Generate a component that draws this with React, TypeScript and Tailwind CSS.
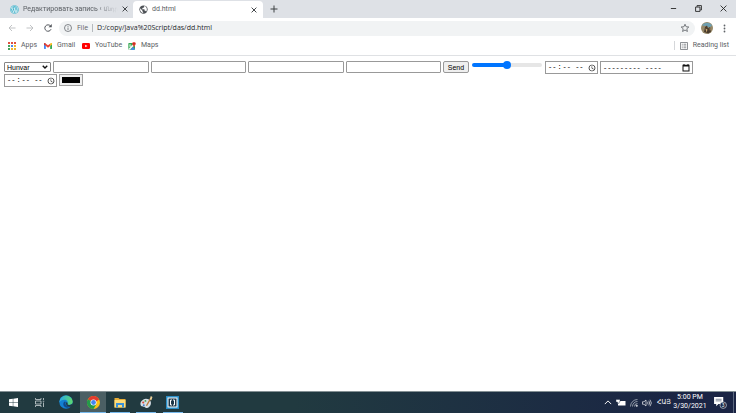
import React, { useState } from "react";

const WordPressIcon = () => (
  <svg viewBox="0 0 20 20" className="size-[9px] shrink-0">
    <circle cx="10" cy="10" r="9.6" fill="#3fb0c9" />
    <circle cx="10" cy="10" r="8" fill="none" stroke="#fff" strokeWidth="1" />
    <path d="M3.5 6.5h4M4.5 7l3.5 9.5L10.3 10 9 6.5h4M10.3 8l3 8.5L16 9c.4-1.6-1-2-1-3.5" fill="none" stroke="#fff" strokeWidth="1.6" />
  </svg>
);

const GlobeIcon = () => (
  <svg viewBox="0 0 24 24" className="size-[9px] shrink-0">
    <circle cx="12" cy="12" r="11" fill="#4d5156" />
    <path d="M3 8.5l6 6v2l2 2v3C5.5 20.5 2 16 3 8.5zM14 3v2l-2 2h-2v2H8v2.5h6l1 1v3h2l2 2c3.5-4 3-12-5-15.5z" fill="#fff" />
  </svg>
);

const CloseIcon = () => (
  <svg viewBox="0 0 10 10" className="size-[6px]" stroke="#3c4043" strokeWidth="1.6" fill="none">
    <path d="M1 1l8 8M9 1L1 9" />
  </svg>
);

const StarIcon = () => (
  <svg viewBox="0 0 24 24" className="size-[10px]" fill="none" stroke="#5f6368" strokeWidth="2">
    <path d="M12 3l2.7 6 6.5.6-4.9 4.3 1.5 6.4L12 16.9l-5.8 3.4 1.5-6.4-4.9-4.3 6.5-.6z" />
  </svg>
);

const AppsIcon = () => (
  <svg viewBox="0 0 8 8" className="size-[8px]">
    <path d="M0 0h2v2H0zM3 0h2v2H3zM6 0h2v2H6z" fill="#e0503f" />
    <path d="M0 3h2v2H0z" fill="#43a25a" />
    <path d="M3 3h2v2H3z" fill="#4c86e8" />
    <path d="M6 3h2v2H6zM3 6h2v2H3zM6 6h2v2H6z" fill="#efb52f" />
    <path d="M0 6h2v2H0z" fill="#43a25a" />
  </svg>
);

const GmailIcon = () => (
  <svg viewBox="0 0 24 18" className="h-[6px] w-[8px]">
    <path d="M0 3v13.5c0 .8.7 1.5 1.5 1.5H5.5V8z" fill="#4285f4" />
    <path d="M24 3v13.5c0 .8-.7 1.5-1.5 1.5h-4V8z" fill="#34a853" />
    <path d="M18.5 2v7L24 4.5V2.5C24 0 21.5-.8 19.7.8z" fill="#fbbc04" />
    <path d="M5.5 9V2L12 7l6.5-5v7L12 14z" fill="#ea4335" />
    <path d="M0 2.5v2L5.5 9V2L4.3.8C2.5-.8 0 0 0 2.5z" fill="#c5221f" />
  </svg>
);

const YouTubeIcon = () => (
  <svg viewBox="0 0 24 18" className="h-[6px] w-[8px]">
    <rect width="24" height="18" rx="4" fill="#f00" />
    <path d="M9.5 5v8l7-4z" fill="#fff" />
  </svg>
);

const MapsIcon = () => (
  <svg viewBox="0 0 24 24" className="size-[8px]">
    <rect x="1" y="3" width="20" height="20" rx="2" fill="#34a853" />
    <path d="M1 21L19 3h2v5L6 23H3z" fill="#f3f3f3" />
    <path d="M7 23l8-8 6 6c0 1-1 2-2 2z" fill="#4285f4" />
    <path d="M18 0c-3 0-5.5 2.3-5.5 5.5C12.5 9.5 17 11 18 16c1-5 5.5-6.5 5.5-10.5C23.5 2.3 21 0 18 0z" fill="#ea4335" />
    <circle cx="18" cy="5.5" r="2" fill="#811411" />
    <path d="M10 9.5H6.5V11h1.8a2 2 0 1 1-.6-2.2l1-1a3.5 3.5 0 1 0 1.3 2.7z" fill="#fff" />
  </svg>
);

const ChromeIcon = () => (
  <svg viewBox="0 0 24 24" className="size-[13px]">
    <circle cx="12" cy="12" r="12" fill="#fbc116" />
    <path d="M12 12L1.6 6A12 12 0 0 1 22.4 6z" fill="#e33b2e" />
    <path d="M1.6 6A12 12 0 0 0 12 24l5.2-9L12 12z" fill="#229a4b" />
    <path d="M12 6h10.4L17 10z" fill="#e33b2e" />
    <circle cx="12" cy="12" r="5.6" fill="#fff" />
    <circle cx="12" cy="12" r="4.4" fill="#4285f4" />
  </svg>
);

const EdgeIcon = () => (
  <svg viewBox="0 0 24 24" className="size-[14px]">
    <defs>
      <linearGradient id="edgeTop" x1="0" x2="1">
        <stop offset="0" stopColor="#28a8e8" />
        <stop offset="1" stopColor="#5ddb6c" />
      </linearGradient>
    </defs>
    <circle cx="12" cy="12" r="11.5" fill="#1380d2" />
    <path d="M.7 11A11.5 11.5 0 0 1 23.5 11c0 4-3 6-6.5 6-2.5 0-3.5-1-2.5-2.5C16 12 14 8 9.5 8 5 8 1.5 10 .7 13z" fill="url(#edgeTop)" />
    <path d="M10 11c-4 2-3.5 8.5 2 10.5 4 1.3 7.5-.5 10-3.5-5 2.5-10.5.5-11-3-.2-1.5.5-2.5 1-3z" fill="#114a8b" />
    <path d="M15 14.5c-1 1.5 0 2.5 2.5 2.5 2.3 0 4.3-1 5.3-2.5l1.2 3.5-3 2c-5 1-9-2-9-5 0-1.5 1-3 1.5-3z" fill="#203a42" />
  </svg>
);

const ExplorerIcon = () => (
  <svg viewBox="0 0 24 22" className="h-[11px] w-[12px]">
    <path d="M1 2h8l2 2h12v17H1z" fill="#e6ad37" />
    <path d="M1 6h22v15H1z" fill="#ffdc78" />
    <path d="M4 12h16v9h-4v-5H8v5H4z" fill="#3a91d8" />
  </svg>
);

const PaintIcon = () => (
  <svg viewBox="0 0 24 24" className="size-[13px]">
    <path d="M11 5C4 6 0 11 1 16c1 4 5 3 7 4 2 1 2 3 5 2 5-1 8-6 7-11-1-4-5-6-9-6z" fill="#d5dfe5" />
    <circle cx="6" cy="12" r="2" fill="#d9493b" />
    <circle cx="10" cy="9" r="1.8" fill="#4aa04f" />
    <circle cx="7" cy="17" r="1.7" fill="#3d7cc9" />
    <path d="M12 18L20 4" stroke="#bd7838" strokeWidth="2.5" />
    <path d="M18 6l2-6 3 2-2 6z" fill="#ecd29a" />
  </svg>
);

const BracketsIcon = () => (
  <svg viewBox="0 0 26 26" className="size-[13px]">
    <rect width="26" height="26" fill="#2b8fc7" />
    <rect x="3" y="3" width="20" height="20" fill="#fff" />
    <rect x="5" y="5" width="16" height="16" fill="#1c3546" />
    <path d="M12 8H9v10h3M14 8h3v10h-3" fill="none" stroke="#fff" strokeWidth="2" />
  </svg>
);

const StartIcon = () => (
  <svg viewBox="0 0 20 20" className="size-[9px]" fill="#fff">
    <path d="M0 3l8.5-1.2v7.7H0zM9.5 1.6L20 0v9.5H9.5zM0 10.5h8.5v7.7L0 17zM9.5 10.5H20V20L9.5 18.4z" />
  </svg>
);

const TaskViewIcon = () => (
  <svg viewBox="0 0 20 18" className="h-[9px] w-[10px]" fill="none" stroke="#d6dcde" strokeWidth="1.5">
    <path d="M1 0v3h11V0M1 18v-3h11v3M1 6h11v6H1zM17 0v4M17 9v9M15.5 6.5h3" />
  </svg>
);

const bookmarks = [
  { label: "Apps", icon: <AppsIcon />, width: "w-[36px]" },
  { label: "Gmail", icon: <GmailIcon />, width: "w-[38px]" },
  { label: "YouTube", icon: <YouTubeIcon />, width: "w-[46px]" },
  { label: "Maps", icon: <MapsIcon />, width: "w-[40px]" },
];

const taskbarApps = [
  { label: "Start", icon: <StartIcon />, line: "" },
  { label: "Task View", icon: <TaskViewIcon />, line: "" },
  { label: "Edge", icon: <EdgeIcon />, line: "" },
  { label: "Chrome", icon: <ChromeIcon />, line: "w-full", active: true },
  { label: "File Explorer", icon: <ExplorerIcon />, line: "w-[20px]" },
  { label: "Paint", icon: <PaintIcon />, line: "w-[20px]" },
  { label: "Brackets", icon: <BracketsIcon />, line: "w-[20px]" },
];

const TabStrip = () => (
  <header className="flex h-[18px] items-stretch bg-[#dee1e6] text-[7px] text-[#3c4043]">
    <div className="flex w-[133px] items-center gap-[4px] pr-[5px] pl-[10px]">
      <WordPressIcon />
      <div className="min-w-0 flex-1 whitespace-nowrap text-[#5a5e63] [mask-image:linear-gradient(to_right,#000_78%,transparent)]">
        Редактировать запись ‹{" "}
        <span className="font-['DejaVu_Sans_Condensed','DejaVu_Sans',sans-serif] text-[6px]">Անդրա</span>
      </div>
      <button aria-label="Close tab" className="shrink-0"><CloseIcon /></button>
    </div>
    <div className="mt-px flex w-[130px] items-center gap-[4px] rounded-t-[4px] bg-white pr-[6px] pl-[6px]">
      <GlobeIcon />
      <div className="flex-1 text-[#5a5e63]">dd.html</div>
      <button aria-label="Close tab"><CloseIcon /></button>
    </div>
    <button aria-label="New tab" className="flex w-[22px] items-center justify-center">
      <svg viewBox="0 0 8 8" className="size-[8px]" stroke="#3c4043" fill="none"><path d="M4 .5v7M.5 4h7" /></svg>
    </button>
    <div className="ml-auto flex h-[16px] items-center text-[#222]">
      <button aria-label="Minimize" className="flex w-[25px] justify-center">
        <svg viewBox="0 0 8 8" className="size-[7px]" stroke="currentColor"><path d="M1 4h6" /></svg>
      </button>
      <button aria-label="Restore" className="flex w-[25px] justify-center">
        <svg viewBox="0 0 12 12" className="size-[7px]" stroke="currentColor" strokeWidth="1.5" fill="none"><path d="M1 3.5h7.5V11H1zM3.5 3V1H11v7.5H9" /></svg>
      </button>
      <button aria-label="Close" className="flex w-[25px] justify-center">
        <svg viewBox="0 0 12 12" className="size-[7px]" stroke="currentColor" strokeWidth="1.5"><path d="M1 1l10 10M11 1L1 11" /></svg>
      </button>
    </div>
  </header>
);

const Toolbar = () => {
  const [url, setUrl] = useState("D:/copy/Java%20Script/das/dd.html");

  return (
    <div className="flex h-[20px] items-center bg-white pr-[10px] pl-[8px] font-['Open_Sans',sans-serif]">
      <div className="flex w-[51px] items-center gap-[10px]">
        <button aria-label="Back">
          <svg viewBox="0 0 16 16" className="size-[8px]" fill="none" stroke="#babcbe" strokeWidth="1.8"><path d="M15 8H2M8 2L2 8l6 6" /></svg>
        </button>
        <button aria-label="Forward">
          <svg viewBox="0 0 16 16" className="size-[8px]" fill="none" stroke="#babcbe" strokeWidth="1.8"><path d="M1 8h13M8 2l6 6-6 6" /></svg>
        </button>
        <button aria-label="Reload">
          <svg viewBox="0 0 16 16" className="size-[8px]" fill="none" stroke="#50545a" strokeWidth="2"><path d="M14 10.5A6.4 6.4 0 1 1 13 4" /><path d="M15.5 0v6.5H9z" fill="#50545a" stroke="none" /></svg>
        </button>
      </div>
      <div className="flex h-[15px] flex-1 items-center rounded-full bg-[#f1f3f4] pr-[5px] pl-[5px] text-[7px]">
        <svg viewBox="0 0 16 16" className="size-[8px]" fill="none" stroke="#5f6368" strokeWidth="1.5"><circle cx="8" cy="8" r="7" /><path d="M8 7v5M8 4v1.7" /></svg>
        <label htmlFor="address" className="ml-[5px] text-[#5f6368]">File</label>
        <span className="mx-[4px] h-[8px] w-px bg-[#b5b9bd]" />
        <input id="address" value={url} onChange={(e) => setUrl(e.target.value)} className="min-w-0 flex-1 text-[#25282c] outline-none" />
        <button aria-label="Bookmark this page"><StarIcon /></button>
      </div>
      <button aria-label="Profile" className="ml-[6px]">
        <svg viewBox="0 0 24 24" className="size-[12px]">
          <circle cx="12" cy="12" r="12" fill="#968868" />
          <path d="M2 7a12 12 0 0 1 20 0l-5 4-8-3z" fill="#6d9fb1" />
          <path d="M6 20l2-10 4-3 2 6 4-3 2 9-5 4z" fill="#493b2c" />
          <path d="M9 13l4 2-2 6zM17 12l2 2-1 4z" fill="#d2ae75" />
        </svg>
      </button>
      <button aria-label="Menu" className="ml-[10px]">
        <svg viewBox="0 0 4 12" className="h-[9px] w-[3px]" fill="#5f6368"><circle cx="2" cy="2" r="1.2" /><circle cx="2" cy="6" r="1.2" /><circle cx="2" cy="10" r="1.2" /></svg>
      </button>
    </div>
  );
};

const BookmarksBar = () => (
  <nav className="flex h-[18px] items-center border-b border-[#dfe1e4] bg-white pr-[7px] pb-[2px] pl-[8px] text-[7px] text-[#5a5e63]">
    {bookmarks.map((item) => (
      <a key={item.label} href="#" className={`flex items-center gap-[5px] ${item.width}`}>
        {item.icon}
        {item.label}
      </a>
    ))}
    <div className="ml-auto flex items-center gap-[5px]">
      <span className="h-[9px] w-px bg-[#d5d7da]" />
      <button className="flex items-center gap-[5px]">
        <svg viewBox="0 0 16 16" className="size-[8px]" fill="none" stroke="#6a6e73" strokeWidth="1.5"><path d="M1 1h14v14H1zM3.5 4.5h2M7 4.5h5.5M3.5 8h2M7 8h5.5M3.5 11.5h2M7 11.5h5.5" /></svg>
        Reading list
      </button>
    </div>
  </nav>
);

const textFields = ["First", "Second", "Third", "Fourth"];

const TimeInput = ({ label }: { label: string }) => (
  <input
    type="time"
    aria-label={label}
    className="h-[13px] w-[53px] border border-[#999] bg-white px-px font-['Liberation_Mono'] text-[7px] leading-none [&::-webkit-calendar-picker-indicator]:m-0 [&::-webkit-calendar-picker-indicator]:size-[8px] [&::-webkit-calendar-picker-indicator]:p-0"
  />
);

const PageForm = () => (
  <form
    onSubmit={(e) => e.preventDefault()}
    className="flex flex-wrap items-start gap-x-[2px] px-[4px] pt-[5px] font-['Liberation_Sans',sans-serif] text-[7px] text-black"
  >
    <div className="grid items-center pt-px">
      <select aria-label="Month" className="col-start-1 row-start-1 h-[10px] w-[47px] appearance-none rounded-[1px] border border-[#858585] bg-white pl-[2px] leading-none">
        <option>Hunvar</option>
      </select>
      <svg viewBox="0 0 12 8" className="pointer-events-none col-start-1 row-start-1 mr-[3px] h-[4px] w-[6px] justify-self-end" fill="none" stroke="#111" strokeWidth="2.8"><path d="M1.5 1.5L6 6l4.5-4.5" /></svg>
    </div>
    <div className="flex w-[388px] gap-[2px]">
      {textFields.map((name) => (
        <input key={name} type="text" aria-label={name} className="h-[12px] min-w-0 flex-1 rounded-[1px] border border-[#999] bg-white px-px" />
      ))}
    </div>
    <button type="submit" className="h-[12px] w-[26px] rounded-[2px] border border-[#999] bg-[#efefef] leading-none">Send</button>
    <input
      type="range"
      aria-label="Range"
      className="mx-px h-[8px] w-[70px] appearance-none bg-transparent [&::-webkit-slider-runnable-track]:h-[4px] [&::-webkit-slider-runnable-track]:rounded-full [&::-webkit-slider-runnable-track]:bg-[linear-gradient(to_right,#0075ff_50%,#e6e6e6_50%)] [&::-webkit-slider-thumb]:-mt-[2px] [&::-webkit-slider-thumb]:size-[8px] [&::-webkit-slider-thumb]:appearance-none [&::-webkit-slider-thumb]:rounded-full [&::-webkit-slider-thumb]:bg-[#0075ff]"
    />
    <TimeInput label="Start time" />
    <div className="flex h-[13px] w-[93px] items-center border border-[#999] bg-white pr-[2px] pl-[2px]">
      <input
        type="text"
        aria-label="Month and year"
        placeholder="--------- ----"
        className="min-w-0 flex-1 font-['Liberation_Mono'] leading-none outline-none placeholder:text-black"
      />
      <button type="button" aria-label="Open calendar">
        <svg viewBox="0 0 16 16" className="size-[8px]"><path d="M3 0h2v1.5h6V0h2v1.5h2V15H1V1.500h2zM3 5v8h10V5z" fill="#111" fillRule="evenodd" /></svg>
      </button>
    </div>
    <TimeInput label="End time" />
    <input
      type="color"
      aria-label="Color"
      defaultValue="#000000"
      className="h-[12px] w-[24px] appearance-none border border-[#a0a0a0] bg-[#efefef] p-[2px] [&::-webkit-color-swatch]:border-0 [&::-webkit-color-swatch-wrapper]:p-0"
    />
  </form>
);

const Taskbar = () => (
  <footer className="flex h-[22px] items-stretch border-t border-[#849094] bg-linear-to-r from-[#213a40] from-40% to-[#1a2444] to-95% text-[7px] text-white">
    <div className="flex w-[186px]">
      {taskbarApps.map((app) => (
        <button key={app.label} aria-label={app.label} className={`flex flex-1 flex-col items-center ${app.active ? "bg-[#4b5f64]" : ""}`}>
          <span className="flex flex-1 items-center">{app.icon}</span>
          <span className={`h-px bg-[#76b9ed] ${app.line}`} />
        </button>
      ))}
    </div>
    <div className="ml-auto flex items-center gap-[4px]">
      <svg viewBox="0 0 10 6" className="h-[5px] w-[8px]" fill="none" stroke="#fff" strokeWidth="1.2"><path d="M1 5l4-4 4 4" /></svg>
      <svg viewBox="0 0 20 14" className="h-[7px] w-[10px]"><path d="M4 4h15v9H4z" fill="#fff" /><path d="M0 1h8v5H6v3H3V6H0z" fill="#fff" stroke="#1c2a43" strokeWidth=".8" /></svg>
      <svg viewBox="0 0 16 16" className="size-[8px]" fill="none" stroke="#c2c8d0" strokeWidth="1.4"><path d="M1 15A14 14 0 0 1 15 1M5 15A10 10 0 0 1 15 5M9 15A6 6 0 0 1 15 9" /><circle cx="13.5" cy="13.5" r="1.5" fill="#fff" /></svg>
      <svg viewBox="0 0 20 16" className="h-[8px] w-[10px]" fill="none" stroke="#fff" strokeWidth="1.3"><path d="M1 5.5h3L8 2v12l-4-3.5H1zM11 5.5q2 2.5 0 5M13.5 3.5q4 4.5 0 9M16 1.5q5.5 6.5 0 13" /></svg>
      <span className="w-[16px] text-center font-['DejaVu_Sans_Condensed','DejaVu_Sans',sans-serif]">ՀԱՅ</span>
      <div className="flex w-[28px] flex-col items-center pb-[2px] leading-[9px] whitespace-nowrap">
        <span>5:00 PM</span>
        <span>3/30/2021</span>
      </div>
      <button aria-label="Notifications" className="ml-[5px]">
        <svg viewBox="0 0 26 24" className="h-[13px] w-[14px]">
          <path d="M2 2h17v13h-9l-4 4v-4H2z" fill="#fff" />
          <path d="M5 6h11M5 9h11" stroke="#1b2745" />
          <circle cx="19" cy="17" r="6" fill="#1b2745" stroke="#cfd4da" strokeWidth="1.3" />
          <text x="19" y="20.5" textAnchor="middle" fontSize="9" fill="#fff">3</text>
        </svg>
      </button>
      <span className="mr-[2px] ml-[2px] h-full w-px bg-[#5c6880]" />
    </div>
  </footer>
);

export default function App() {
  return (
    <div className="flex min-h-screen flex-col bg-white font-['Roboto','DejaVu_Sans',sans-serif]">
      <TabStrip />
      <Toolbar />
      <BookmarksBar />
      <main className="flex-1">
        <PageForm />
      </main>
      <Taskbar />
    </div>
  );
}
